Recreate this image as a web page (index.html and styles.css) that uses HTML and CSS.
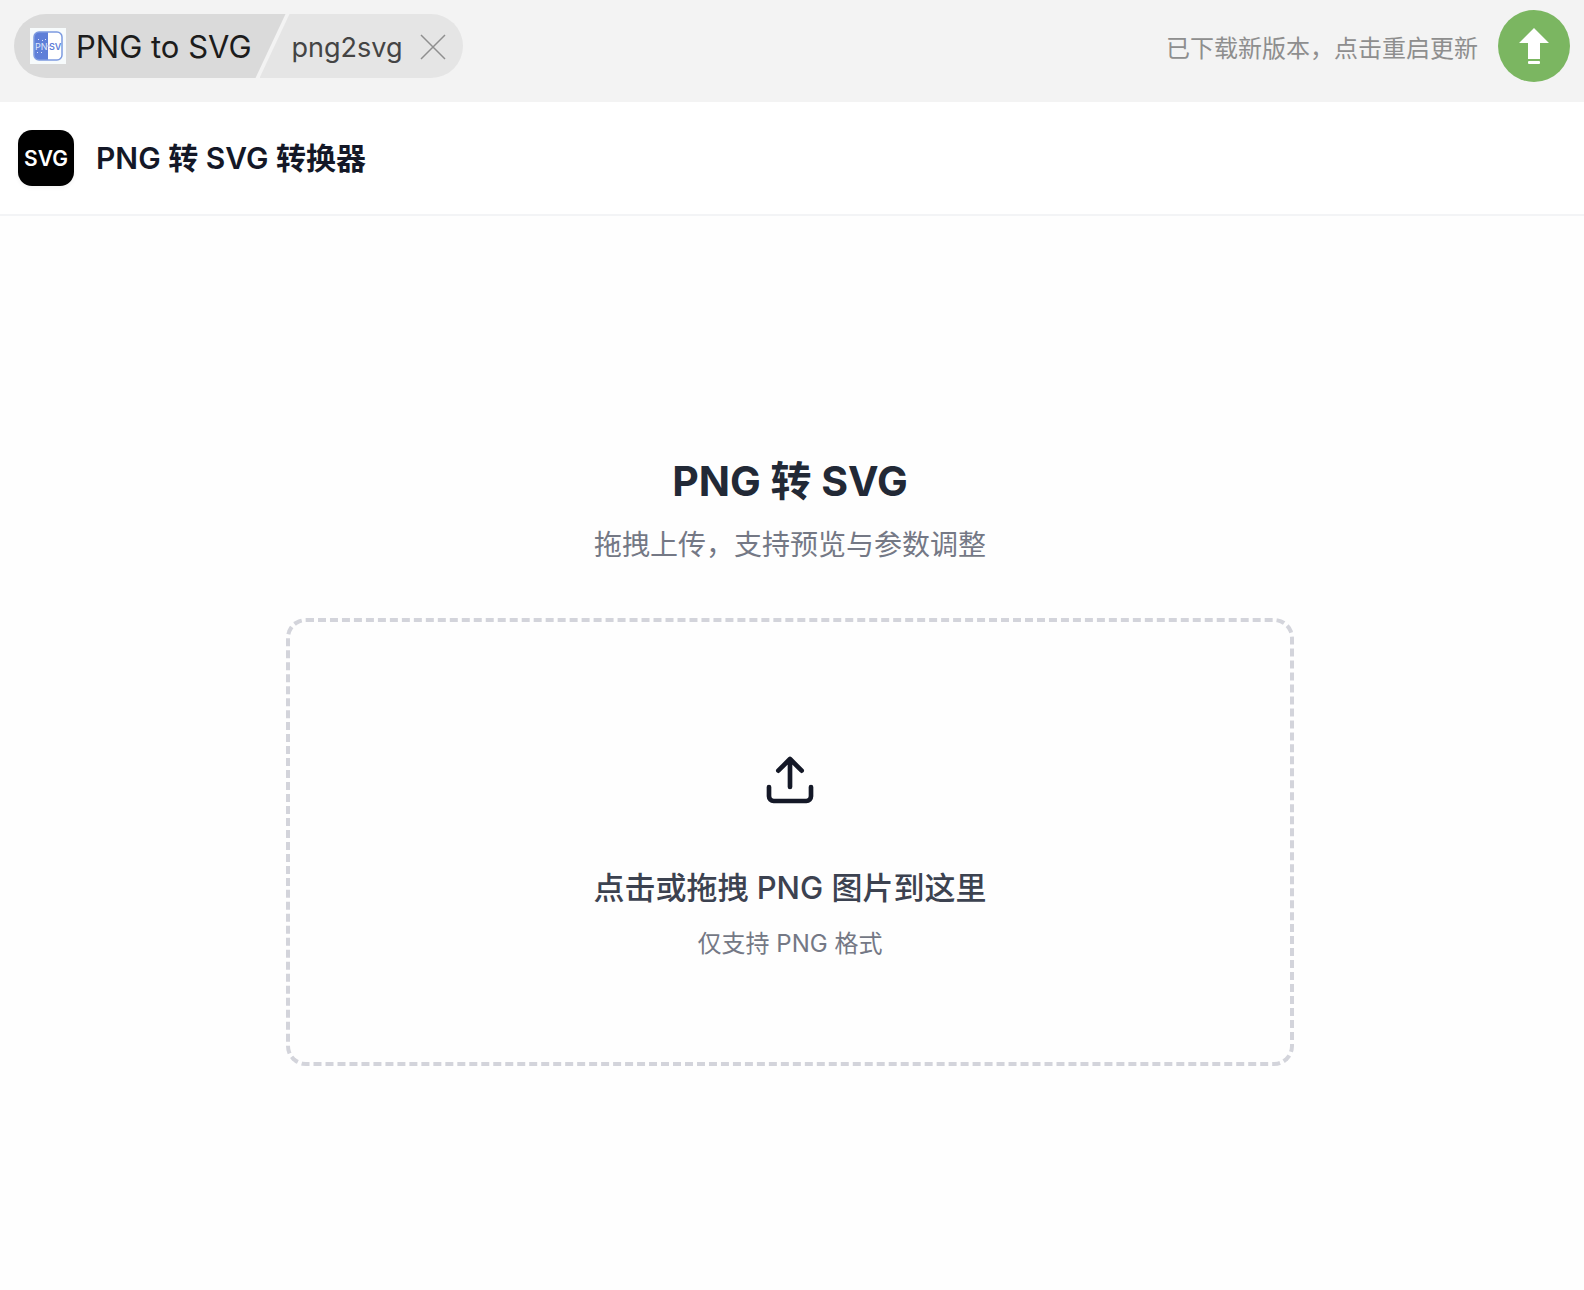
FILE: index.html
```html
<!DOCTYPE html>
<html lang="zh-CN">
<head>
  <meta charset="UTF-8">
  <title>PNG 转 SVG 转换器</title>
  <meta name="viewport" content="width=device-width, initial-scale=1">
  <link rel="stylesheet" href="styles.css">
</head>
<body>
<div class="toolbar">
  <div class="tabs">
    <div class="tab tab-plugin">
      <svg class="tab-icon" viewBox="0 0 36 36" aria-hidden="true">
        <rect width="36" height="36" fill="#f7fbfc"/>
        <rect x="4" y="4" width="28" height="28" rx="5" fill="#fff"/>
        <path d="M18 4H9a5 5 0 0 0-5 5v18a5 5 0 0 0 5 5h9z" fill="#5f7fd8"/>
        <rect x="4" y="4" width="28" height="28" rx="5" fill="none" stroke="#7d9be0" stroke-width="1.5"/>
        <text class="tab-icon-png" x="5" y="22">PN</text>
        <text class="tab-icon-svg" x="19" y="22">SV</text>
        <path d="M8 11.500h1M12 12.500h1M15 11.500h1M7 24.500h1M11 24.500h1" stroke="#dfe8fb"/>
        <path d="M16 18h4" stroke="#b7c8f0"/>
      </svg>
      <span>PNG to SVG</span>
    </div>
    <div class="tab tab-command">
      <span>png2svg</span>
      <button class="tab-close" type="button" aria-label="关闭">
        <svg width="26" height="26" viewBox="0 0 26 26" fill="none" stroke="#8f8f8f" stroke-width="1.5">
          <path d="M1 1l24 24M25 1L1 25"/>
        </svg>
      </button>
    </div>
  </div>
  <div class="update">
    <span>已下载新版本，点击重启更新</span>
    <button class="update-button" type="button" aria-label="重启更新">
      <svg width="72" height="72" viewBox="0 0 72 72" fill="#fff">
        <path d="M36 18l15 15h-9v16H30V33h-9z"/>
        <rect x="30" y="51" width="12" height="3" rx="1"/>
      </svg>
    </button>
  </div>
</div>
<header class="header">
  <div class="logo">SVG</div>
  <h1 class="header-title">PNG 转 SVG 转换器</h1>
</header>
<main class="main">
  <h2 class="title">PNG 转 SVG</h2>
  <p class="subtitle">拖拽上传，支持预览与参数调整</p>
  <button class="dropzone" type="button">
    <span class="dropzone-icon">
      <svg width="56" height="56" viewBox="0 0 24 24" fill="none" stroke="currentColor" stroke-width="2" stroke-linecap="round" stroke-linejoin="round">
        <path d="M21 15v4a2 2 0 0 1-2 2H5a2 2 0 0 1-2-2v-4"/>
        <path d="M17 8l-5-5-5 5M12 3v12"/>
      </svg>
    </span>
    <span class="dropzone-text">点击或拖拽 PNG 图片到这里</span>
    <span class="dropzone-hint">仅支持 PNG 格式</span>
  </button>
</main>
</body>
</html>
```

FILE: styles.css
```css
* {
    box-sizing: border-box;
}

body {
    display: flex;
    flex-direction: column;
    min-height: 100vh;
    margin: 0;
    background-color: #fefefe;
    font-family: Inter, "Noto Sans CJK SC", sans-serif;
}

button {
    padding: 0;
    border: 0;
    background: none;
    font-family: inherit;
    cursor: pointer;
}

svg {
    display: block;
}

.toolbar {
    display: flex;
    justify-content: space-between;
    align-items: flex-start;
    padding: 10px 14px 20px;
    background-color: #f3f3f3;
}

.tabs {
    display: flex;
    height: 64px;
    margin-top: 4px;
    border-radius: 32px;
    overflow: hidden;
}

.tab {
    display: flex;
    align-items: center;
}

/* both tabs share a slanted edge, 30px wide */
.tab-plugin {
    gap: 10px;
    padding: 0 34px 0 16px;
    background-color: #dadada;
    color: #1c1c1c;
    font-size: 31px;
    clip-path: polygon(0 0, 100% 0, calc(100% - 30px) 100%, 0 100%);
}

.tab-command {
    gap: 18px;
    margin-left: -26px;
    padding: 2px 17px 0 32px;
    background-color: #e5e5e5;
    color: #444;
    font-size: 27px;
    clip-path: polygon(30px 0, 100% 0, 100% 100%, 0 100%);
}

.tab-icon {
    width: 36px;
    height: 36px;
}

.tab-icon-png,
.tab-icon-svg {
    font-size: 9px;
}

.tab-icon-png {
    fill: #dfe8fb;
}

.tab-icon-svg {
    fill: #5f7fd8;
    font-weight: 600;
}

.update {
    display: flex;
    align-items: center;
    gap: 20px;
    color: #8e8e8e;
    font-size: 24px;
}

.update-button {
    width: 72px;
    height: 72px;
    border-radius: 50%;
    background-color: #7bb661;
}

.header {
    display: flex;
    align-items: center;
    gap: 22px;
    padding: 28px 18px;
    border-bottom: 2px solid #f3f4f6;
    background-color: #fff;
}

.logo {
    display: flex;
    justify-content: center;
    align-items: center;
    width: 56px;
    height: 56px;
    border-radius: 14px;
    background-color: #000;
    box-shadow: 0 2px 4px rgba(0, 0, 0, 0.05);
    color: #fff;
    font-size: 21px;
    font-weight: 600;
}

.header-title {
    margin: 0;
    color: #141827;
    font-size: 30px;
    font-weight: 600;
    line-height: 56px;
}

.main {
    display: flex;
    flex: 1;
    flex-direction: column;
    justify-content: center;
    align-items: center;
    padding: 0 4px 0 0;
}

.title {
    margin: 0;
    color: #222936;
    font-size: 41px;
    font-weight: 700;
    line-height: 82px;
}

.subtitle {
    margin: 0 0 50px;
    color: #747885;
    font-size: 28px;
    font-weight: 400;
    line-height: 46px;
}

.dropzone {
    display: flex;
    flex-direction: column;
    justify-content: center;
    align-items: center;
    width: 100%;
    max-width: 1008px;
    padding: 98px 32px;
    border: 4px dashed #d3d4db;
    border-radius: 20px;
}

.dropzone-icon {
    padding: 32px;
    color: #141827;
}

.dropzone-text {
    margin-top: 24px;
    color: #3c4250;
    font-size: 31px;
    font-weight: 500;
    line-height: 48px;
}

.dropzone-hint {
    margin-top: 12px;
    color: #747885;
    font-size: 24px;
    line-height: 40px;
}
```
